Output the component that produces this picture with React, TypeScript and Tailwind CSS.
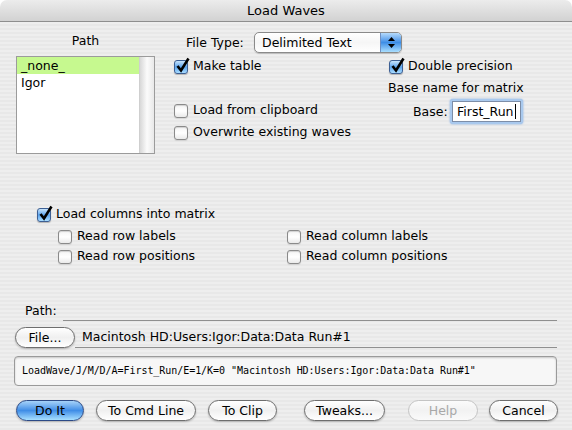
import React from "react";

const FONT = "font-['Lucida_Grande','DejaVu_Sans',sans-serif]";

function Check({ checked }: { checked?: boolean }) {
  if (checked) {
    return (
      <div className="relative w-[15px] h-[15px] shrink-0">
        <div className="absolute left-0 top-[1px] w-[14px] h-[14px] rounded-[3px] border border-[#3d5f93] bg-linear-to-b from-[#c8e4fb] via-[#5ba3ec] to-[#a9dcff] shadow-[0_1px_1px_rgba(0,0,0,0.25)]" />
        <svg className="absolute left-[1px] top-[-2px]" width="16" height="16" viewBox="0 0 16 16">
          <path d="M2.5 9 L6 13.5 L13.5 1.5" fill="none" stroke="#000" strokeWidth="2.6" strokeLinejoin="miter" />
        </svg>
      </div>
    );
  }
  return (
    <div className="w-[15px] h-[15px] shrink-0 flex items-end">
      <div className="w-[14px] h-[14px] rounded-[3px] border border-[#8a8a8a] bg-linear-to-b from-[#f4f4f4] via-white to-[#eaeaea] shadow-[inset_0_1px_1px_rgba(0,0,0,0.15),0_1px_1px_rgba(0,0,0,0.1)]" />
    </div>
  );
}

function CheckRow({ checked, label, className = "" }: { checked?: boolean; label: string; className?: string }) {
  return (
    <div className={`flex items-center h-[18px] gap-[4px] ${className}`}>
      <Check checked={checked} />
      <span className="text-[12.5px] leading-[16px] text-black whitespace-nowrap">{label}</span>
    </div>
  );
}

function Btn({
  label,
  w,
  primary,
  disabled,
}: {
  label: string;
  w: string;
  primary?: boolean;
  disabled?: boolean;
}) {
  const base =
    "h-[21px] rounded-full flex items-center justify-center text-[12.5px] leading-[16px] shrink-0 shadow-[0_1px_2px_rgba(0,0,0,0.25)]";
  if (primary) {
    return (
      <div
        className={`${base} ${w} border border-[#2c4a86] bg-linear-to-b from-[#a6d2f8] via-[#3f8de6] to-[#a8e0ff] text-black`}
      >
        {label}
      </div>
    );
  }
  if (disabled) {
    return (
      <div
        className={`${base} ${w} border border-[#c4c4c4] bg-linear-to-b from-[#fbfbfb] via-[#f2f2f2] to-[#fafafa] text-[#a8a8a8] shadow-none`}
      >
        {label}
      </div>
    );
  }
  return (
    <div
      className={`${base} ${w} border border-[#6e6e6e] bg-linear-to-b from-white via-[#f0f0f0] to-[#ffffff] text-black`}
    >
      {label}
    </div>
  );
}

export default function App() {
  return (
    <div className={`w-[572px] h-[430px] bg-white overflow-hidden ${FONT}`}>
      <div className="w-full h-full rounded-t-[7px] overflow-hidden flex flex-col">
        {/* Title bar */}
        <div className="h-[22px] shrink-0 bg-linear-to-b from-[#ececec] to-[#d2d2d2] border-b border-[#8e8e8e] flex items-center justify-center">
          <span className="text-[13px] leading-[16px] text-black">Load Waves</span>
        </div>

        {/* Body */}
        <div className="flex-1 flex flex-col bg-[image:repeating-linear-gradient(to_bottom,#eeeeee_0px,#eeeeee_2px,#e8e8e8_2px,#e8e8e8_4px)]">
          {/* Top section */}
          <div className="h-[128px] shrink-0 flex items-start">
            <div className="ml-[16px] w-[139px] flex flex-col">
              <div className="mt-[11px] h-[16px] text-center text-[12.5px] leading-[16px]">Path</div>
              <div className="mt-[7px] h-[98px] w-[139px] border border-[#9b9b9b] bg-white flex">
                <div className="flex-1 flex flex-col">
                  <div className="h-[17px] bg-[#c6f98f] pl-[4px] text-[12.5px] leading-[17px]">_none_</div>
                  <div className="h-[17px] pl-[4px] text-[12.5px] leading-[17px]">Igor</div>
                </div>
                <div className="w-[15px] bg-linear-to-r from-[#d8d8d8] via-[#fbfbfb] to-[#e9e9e9] border-l border-[#cfcfcf]" />
              </div>
            </div>

            <div className="ml-[19px] flex flex-col">
              {/* File type */}
              <div className="mt-[10px] h-[21px] flex items-center">
                <span className="ml-[12px] text-[12.5px] leading-[16px] w-[68px]">File Type:</span>
                <div className="ml-[0px] w-[148px] h-[21px] rounded-[5px] border border-[#8a8a8a] bg-linear-to-b from-white via-[#f6f6f6] to-white flex shadow-[0_1px_1px_rgba(0,0,0,0.2)] overflow-hidden">
                  <div className="flex-1 pl-[7px] text-[12.5px] leading-[19px]">Delimited Text</div>
                  <div className="w-[21px] border-l border-[#6f8fc2] bg-linear-to-b from-[#b5dafb] via-[#3e8ee6] to-[#a9defe] flex flex-col items-center justify-center gap-[3px]">
                    <svg width="7" height="4" viewBox="0 0 7 4"><path d="M3.5 0 L7 4 L0 4 Z" fill="#000" /></svg>
                    <svg width="7" height="4" viewBox="0 0 7 4"><path d="M0 0 L7 0 L3.5 4 Z" fill="#000" /></svg>
                  </div>
                </div>
              </div>

              <div className="flex">
                <div className="w-[215px] flex flex-col">
                  <CheckRow checked label="Make table" className="mt-[4px]" />
                  <CheckRow label="Load from clipboard" className="mt-[26px]" />
                  <CheckRow label="Overwrite existing waves" className="mt-[4px]" />
                </div>
                <div className="flex flex-col">
                  <CheckRow checked label="Double precision" className="mt-[4px]" />
                  <div className="mt-[5px] -ml-[1px] h-[16px] text-[12.5px] leading-[16px] whitespace-nowrap">Base name for matrix</div>
                  <div className="mt-[3px] flex items-center h-[25px]">
                    <span className="ml-[24px] text-[12.5px] leading-[16px] w-[37px]">Base:</span>
                    <div className="w-[73px] h-[25px] rounded-[3px] bg-[#a9c9ee] p-[2px] shadow-[0_0_2px_#6fa2e0]">
                      <div className="w-full h-full bg-white border border-[#7d8ea8] flex items-center pl-[4px]">
                        <span className="text-[12.5px] leading-[16px]">First_Run</span>
                        <span className="ml-[1px] w-[1px] h-[15px] bg-black" />
                      </div>
                    </div>
                  </div>
                </div>
              </div>
            </div>
          </div>

          {/* Matrix section */}
          <div className="mt-[55px] ml-[37px] flex flex-col">
            <CheckRow checked label="Load columns into matrix" />
            <div className="mt-[4px] ml-[21px] flex">
              <div className="w-[229px] flex flex-col gap-[2px]">
                <CheckRow label="Read row labels" />
                <CheckRow label="Read row positions" />
              </div>
              <div className="flex flex-col gap-[2px]">
                <CheckRow label="Read column labels" />
                <CheckRow label="Read column positions" />
              </div>
            </div>
          </div>

          {/* Path section */}
          <div className="mt-[38px] ml-[25px] mr-[15px] flex items-end h-[16px]">
            <span className="text-[12.5px] leading-[16px]">Path:</span>
            <div className="ml-[6px] flex-1 h-[1px] bg-[#8f8f8f] mb-[-2px]" />
          </div>
          <div className="mt-[8px] ml-[15px] mr-[15px] flex items-center h-[21px]">
            <Btn label="File..." w="w-[60px]" />
            <div className="flex-1 self-stretch flex flex-col justify-center border-b border-[#8f8f8f] pl-[7px]">
              <span className="text-[12.5px] leading-[16px] whitespace-nowrap">Macintosh HD:Users:Igor:Data:Data Run#1</span>
            </div>
          </div>

          {/* Command line */}
          <div className="mt-[8px] ml-[14px] mr-[15px] h-[30px] rounded-[4px] border border-[#9a9a9a] bg-[#f7f7f7] shadow-[inset_0_1px_2px_rgba(0,0,0,0.2)] flex items-center pl-[7px]">
            <span className="font-['DejaVu_Sans_Mono',monospace] text-[10px] leading-[12px] tracking-[-0.05px] whitespace-pre">
              LoadWave/J/M/D/A=First_Run/E=1/K=0 "Macintosh HD:Users:Igor:Data:Data Run#1"
            </span>
          </div>

          {/* Buttons */}
          <div className="mt-[14px] ml-[16px] mr-[15px] flex items-center h-[21px]">
            <Btn label="Do It" w="w-[68px]" primary />
            <div className="ml-[12px]"><Btn label="To Cmd Line" w="w-[100px]" /></div>
            <div className="ml-[12px]"><Btn label="To Clip" w="w-[69px]" /></div>
            <div className="ml-[27px]"><Btn label="Tweaks..." w="w-[81px]" /></div>
            <div className="ml-[23px]"><Btn label="Help" w="w-[70px]" disabled /></div>
            <div className="ml-[11px]"><Btn label="Cancel" w="w-[69px]" /></div>
          </div>
        </div>
      </div>
    </div>
  );
}
